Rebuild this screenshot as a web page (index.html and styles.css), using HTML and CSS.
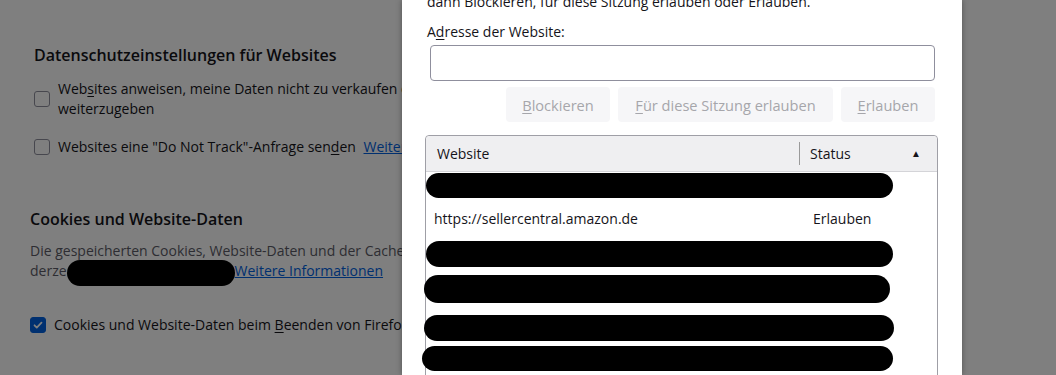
FILE: index.html
```html
<!DOCTYPE html>
<html lang="de">
<head>
  <meta charset="UTF-8" />
  <title>Einstellungen</title>
  <link rel="stylesheet" href="styles.css">
</head>
<body>
  <main class="page">
    <section class="group group-privacy">
      <h2>Datenschutzeinstellungen für Websites</h2>
      <label class="check">
        <span class="box"></span>
        <span class="check-text wrap">Web<u>s</u>ites anweisen, meine Daten nicht zu verkaufen oder weiterzugeben</span>
      </label>
      <label class="check check-dnt">
        <span class="box"></span>
        <span class="check-text">Websites eine "Do Not Track"-Anfrage sen<u>d</u>en <a href="#" class="link">Weitere Informationen</a></span>
      </label>
    </section>

    <section class="group group-cookies">
      <h2>Cookies und Website-Daten</h2>
      <p class="desc">Die gespeicherten Cookies, Website-Daten und der Cache belegen<br>derze<span class="redact-inline"></span><a href="#" class="link">Weitere Informationen</a></p>
      <label class="check check-clear">
        <span class="box checked">
          <svg viewBox="0 0 16 16" width="16" height="16"><path d="M4 8.3l2.6 2.6L12 5.4" fill="none" stroke="#fff" stroke-width="2" stroke-linecap="round" stroke-linejoin="round"/></svg>
        </span>
        <span class="check-text">Cookies und Website-Daten beim <u>B</u>eenden von Firefox löschen</span>
      </label>
    </section>
  </main>

  <div class="backdrop"></div>

  <div class="dialog">
    <p class="intro">dann Blockieren, für diese Sitzung erlauben oder Erlauben.</p>
    <label class="field-label" for="siteUrl">A<u>d</u>resse der Website:</label>
    <input type="text" id="siteUrl" class="url-input" />

    <div class="actions">
      <button class="btn" disabled><u>B</u>lockieren</button>
      <button class="btn btn-session" disabled><u>F</u>ür diese Sitzung erlauben</button>
      <button class="btn btn-allow" disabled><u>E</u>rlauben</button>
    </div>

    <div class="tree">
      <div class="tree-head">
        <div class="col-site">Website</div>
        <div class="col-status">Status <span class="sort">&#9650;</span></div>
      </div>
      <div class="tree-body">
        <div class="row"></div>
        <div class="row">
          <div class="col-site">https://sellercentral.amazon.de</div>
          <div class="col-status">Erlauben</div>
        </div>
        <div class="row"></div>
        <div class="row"></div>
        <div class="row"></div>
        <div class="row"></div>
        <div class="row"></div>

        <!-- redaction marks -->
        <span class="redact r1"></span>
        <span class="redact r2"></span>
        <span class="redact r3"></span>
        <span class="redact r4"></span>
        <span class="redact r5"></span>
      </div>
    </div>
  </div>
</body>
</html>
```

FILE: styles.css
```css
body {
  margin: 0;
  font-family: 'Open Sans', sans-serif;
  font-size: 14px;
  color: #15141a;
  background: #fff;
  height: 375px;
  overflow: hidden;
  position: relative;
}

u {
  text-decoration-thickness: 1px;
  text-underline-offset: 2px;
}

.page {
  padding: 43px 0 0 30px;
  width: 1000px;
}

.group h2 {
  margin: 0;
  font-size: 16px;
  font-weight: 600;
  line-height: 24px;
}

.group-privacy {
  padding-left: 4px;
}

.check {
  display: flex;
  align-items: center;
  gap: 8px;
  line-height: 20px;
  white-space: nowrap;
}

.group-privacy .check:first-of-type {
  margin-top: 12px;
}

.check-text.wrap {
  white-space: normal;
  width: 390px;
}

.check-dnt {
  margin-top: 18px;
}

.box {
  width: 14px;
  height: 14px;
  border: 1px solid #8f8f9d;
  border-radius: 3px;
  flex-shrink: 0;
  display: flex;
  align-items: center;
  justify-content: center;
}

.box.checked {
  background: #0061e0;
  border-color: #0061e0;
}

.link {
  color: #0061e0;
  margin-left: 4px;
}

.group-cookies {
  margin-top: 50px;
}

.desc {
  margin: 10px 0 0;
  color: #5b5b66;
  line-height: 20px;
  white-space: nowrap;
}

.desc .link {
  margin-left: 0;
}

.redact-inline {
  display: inline-block;
  width: 168px;
  height: 26px;
  margin: -8px 0 -8px 0;
  vertical-align: -2px;
  background: #000;
  border-radius: 13px;
}

.check-clear {
  margin-top: 34px;
}

.backdrop {
  position: absolute;
  inset: 0;
  background: rgba(0, 0, 0, 0.5);
}

.dialog {
  position: absolute;
  top: 0;
  left: 402px;
  width: 560px;
  height: 375px;
  background: #fff;
  box-shadow: 0 0 6px rgba(0, 0, 0, 0.35);
  padding: 0 24px 0 25px;
  box-sizing: border-box;
}

.intro {
  margin: -8px 0 0;
  line-height: 20px;
  white-space: nowrap;
}

.field-label {
  display: block;
  margin-top: 10px;
  line-height: 20px;
}

.url-input {
  display: block;
  margin: 3px 0 0 3px;
  width: 505px;
  height: 36px;
  box-sizing: border-box;
  border: 1px solid #8f8f9d;
  border-radius: 4px;
  background: #fff;
}

.actions {
  display: flex;
  justify-content: flex-end;
  gap: 8px;
  margin-top: 6px;
  width: 508px;
}

.btn {
  height: 35px;
  padding: 0 10px;
  border: none;
  border-radius: 4px;
  background: #f6f6f8;
  color: #a6a6ab;
  font-family: inherit;
  font-size: 14.6px;
}

.btn:first-child {
  width: 104px;
}

.btn-session {
  width: 215px;
}

.btn-allow {
  width: 94px;
}

.tree {
  margin-top: 13px;
  margin-left: -2px;
  width: 513px;
  height: 260px;
  border: 1px solid #9f9fa6;
  border-radius: 4px 4px 0 0;
  box-sizing: border-box;
}

.tree-head {
  display: flex;
  height: 35px;
  align-items: center;
  background: #efeff1;
  border-bottom: 1px solid #d4d4d8;
  border-radius: 4px 4px 0 0;
}

.tree-head .col-site {
  width: 362px;
  padding-left: 11px;
}

.col-site {
  width: 373px;
  padding-left: 8px;
}

.tree-head .col-status {
  border-left: 1px solid #9a9a9a;
  line-height: 23px;
  padding-left: 10px;
  display: flex;
  justify-content: space-between;
  align-items: center;
  width: 138px;
  padding-right: 16px;
  box-sizing: border-box;
}

.sort {
  font-size: 10px;
}

.tree-body {
  position: relative;
}

.row {
  display: flex;
  align-items: center;
  height: 31px;
}

.row .col-status {
  padding-left: 6px;
}

.redact {
  position: absolute;
  background: #000;
  border-radius: 13px;
}

.r1 { top: 1px; left: 0; width: 467px; height: 25px; }
.r2 { top: 69px; left: 0; width: 467px; height: 26px; }
.r3 { top: 103px; left: -2px; width: 466px; height: 28px; border-radius: 14px; }
.r4 { top: 143px; left: -2px; width: 470px; height: 26px; }
.r5 { top: 174px; left: -4px; width: 471px; height: 25px; }
```
